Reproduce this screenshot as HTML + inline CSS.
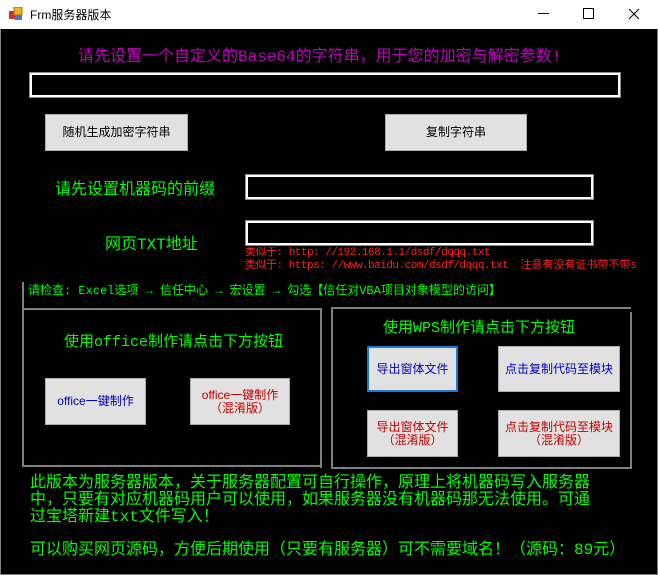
<!DOCTYPE html>
<html><head><meta charset="utf-8"><style>
*{margin:0;padding:0;box-sizing:border-box}
body{width:658px;height:575px;background:#000;position:relative;overflow:hidden;font-family:"Liberation Mono","Noto Sans CJK SC",monospace}
.a{position:absolute;white-space:nowrap}
.tb{position:absolute;left:0;top:0;width:658px;height:29px;background:#fff;font-family:"Liberation Sans","Noto Sans CJK SC",sans-serif;font-size:12px;color:#000}
.in{position:absolute;background:#000;border:2px solid #fff;outline:1px solid #888}
.btn{position:absolute;background:#e1e1e1;border:1px solid #adadad;display:flex;align-items:center;justify-content:center;text-align:center;font-size:12px;line-height:13px;font-family:"Liberation Sans","Noto Sans CJK SC",sans-serif}
.g{color:#00ff00;font-size:16px}
.line{position:absolute;background:#808080}
</style></head><body>
<div class="tb">
 <svg class="a" style="left:9px;top:7px" width="14" height="14"><rect x="0" y="4" width="6" height="8" fill="#c33"/><rect x="5" y="0" width="8" height="8" fill="#f0b020" stroke="#a07010"/><rect x="6" y="8" width="7" height="5" fill="#4a7ad0"/></svg>
 <div class="a" style="left:30px;top:6px">Frm服务器版本</div>
 <div class="a" style="left:538px;top:13px;width:11px;height:1px;background:#000"></div>
 <div class="a" style="left:583px;top:8px;width:11px;height:11px;border:1px solid #000"></div>
 <svg class="a" style="left:628px;top:8px" width="12" height="12"><path d="M1 1L11 11M11 1L1 11" stroke="#000" stroke-width="1.1"/></svg>
</div>
<div class="line" style="left:0;top:29px;width:1px;height:546px"></div>
<div class="line" style="left:657px;top:29px;width:1px;height:546px"></div>
<div class="line" style="left:0;top:574px;width:658px;height:1px"></div>

<div class="a" style="left:78px;top:42px;color:#c000c0;font-size:16px">请先设置一个自定义的Base64的字符串，用于您的加密与解密参数!</div>
<div class="in" style="left:30px;top:73px;width:590px;height:24px"></div>
<div class="btn" style="left:45px;top:114px;width:143px;height:37px">随机生成加密字符串</div>
<div class="btn" style="left:385px;top:114px;width:142px;height:37px">复制字符串</div>

<div class="a g" style="left:55px;top:175px">请先设置机器码的前缀</div>
<div class="in" style="left:246px;top:175px;width:347px;height:24px"></div>
<div class="a g" style="left:105px;top:230px">网页TXT地址</div>
<div class="in" style="left:246px;top:221px;width:347px;height:24px"></div>
<div class="a" style="left:245px;top:247px;width:413px;overflow:hidden;color:#ff2020;font-size:11px;line-height:13px;letter-spacing:-0.5px">类似于: http: //192.168.1.1/dsdf/dqqq.txt<br>类似于: https: //www.baidu.com/dsdf/dqqq.txt&nbsp; <span style="letter-spacing:0">注意有没有证书带不带s</span></div>

<div class="line" style="left:22px;top:282px;width:2px;height:184px"></div>
<div class="a" style="left:28px;top:281px;color:#00ff00;font-size:12px">请检查: Excel选项 → 信任中心 → 宏设置 → 勾选【信任对VBA项目对象模型的访问】</div>
<div class="line" style="left:22px;top:308px;width:300px;height:2px"></div>
<div class="line" style="left:320px;top:308px;width:2px;height:160px"></div>
<div class="line" style="left:22px;top:465px;width:300px;height:2px"></div>
<div class="a" style="left:64px;top:330px;color:#00ff00;font-size:15px">使用office制作请点击下方按钮</div>
<div class="btn" style="left:45px;top:378px;width:101px;height:47px;color:#0000c0">office一键制作</div>
<div class="btn" style="left:190px;top:378px;width:100px;height:47px;color:#c00000">office一键制作<br>（混淆版）</div>

<div class="line" style="left:331px;top:307px;width:300px;height:2px"></div>
<div class="line" style="left:331px;top:307px;width:2px;height:162px"></div>
<div class="line" style="left:630px;top:312px;width:2px;height:157px"></div>
<div class="line" style="left:331px;top:467px;width:301px;height:2px"></div>
<div class="a" style="left:383px;top:316px;color:#00ff00;font-size:15px">使用WPS制作请点击下方按钮</div>
<div class="btn" style="left:367px;top:346px;width:91px;height:46px;color:#0000c0;border:2px solid #1a7ad8">导出窗体文件</div>
<div class="btn" style="left:498px;top:346px;width:122px;height:46px;color:#0000c0">点击复制代码至模块</div>
<div class="btn" style="left:367px;top:410px;width:91px;height:47px;color:#c00000">导出窗体文件<br>（混淆版）</div>
<div class="btn" style="left:498px;top:410px;width:122px;height:47px;color:#c00000">点击复制代码至模块<br>（混淆版）</div>

<div class="a g" style="left:30px;top:475px;line-height:17px;white-space:normal;width:570px">此版本为服务器版本，关于服务器配置可自行操作，原理上将机器码写入服务器中，只要有对应机器码用户可以使用，如果服务器没有机器码那无法使用。可通过宝塔新建txt文件写入！</div>
<div class="a g" style="left:30px;top:535px">可以购买网页源码，方便后期使用（只要有服务器）可不需要域名！（源码：89元）</div>
</body></html>
